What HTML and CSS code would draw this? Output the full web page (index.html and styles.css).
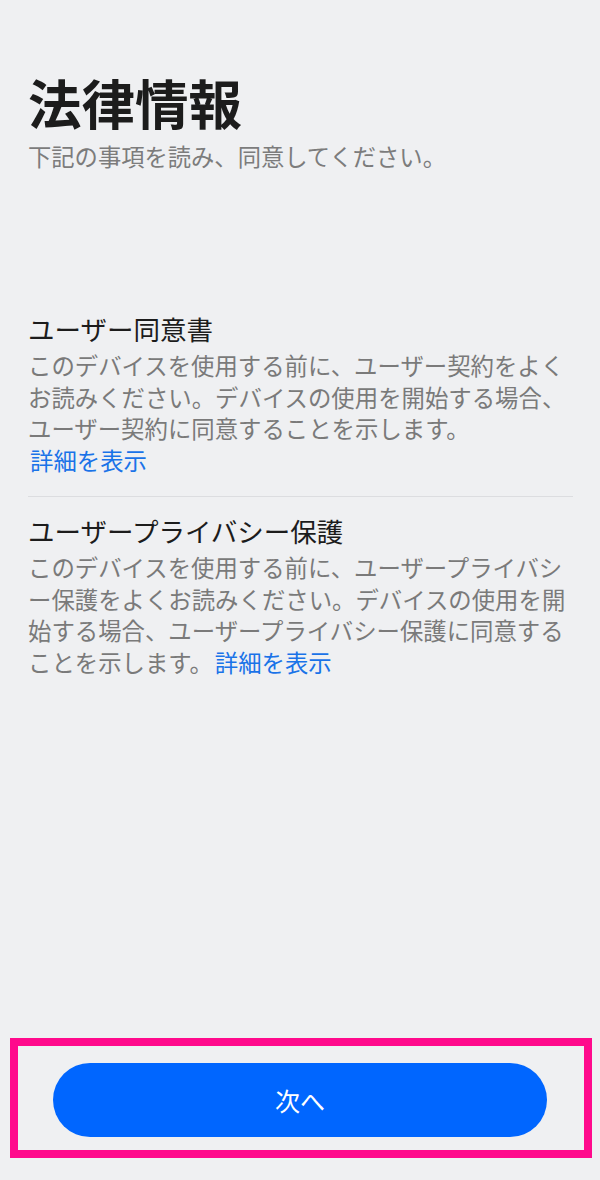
FILE: index.html
```html
<!DOCTYPE html>
<html lang="ja">
<head>
    <meta charset="UTF-8">
    <meta name="viewport" content="width=device-width, initial-scale=1.0">
    <title>法律情報</title>
    <link rel="stylesheet" href="styles.css">
</head>
<body>
    <div class="page">
        <!-- ヘッダー -->
        <div class="header">
            <h1>法律情報</h1>
            <p class="subtitle">下記の事項を読み、同意してください。</p>
        </div>

        <!-- 同意事項 -->
        <div class="terms">
            <div class="term-item">
                <h2>ユーザー同意書</h2>
                <p>このデバイスを使用する前に、ユーザー契約をよくお読みください。デバイスの使用を開始する場合、ユーザー契約に同意することを示します。<a href="#" class="more-link">詳細を表示</a></p>
            </div>
            <div class="term-item">
                <h2>ユーザープライバシー保護</h2>
                <p>このデバイスを使用する前に、ユーザープライバシー保護をよくお読みください。デバイスの使用を開始する場合、ユーザープライバシー保護に同意することを示します。<a href="#" class="more-link">詳細を表示</a></p>
            </div>
        </div>

        <!-- フッター -->
        <div class="footer">
            <button class="next-button">次へ</button>
        </div>
    </div>
</body>
</html>
```

FILE: styles.css
```css
* {
    box-sizing: border-box;
}

body {
    font-family: "Noto Sans CJK JP", "Noto Sans", sans-serif;
    background-color: #eff0f2;
    color: #1c1c1c;
    margin: 0;
}

.page {
    min-height: 100vh;
    display: flex;
    flex-direction: column;
}

.header {
    padding: 70px 28px 0 28px;
}

h1 {
    font-size: 53.5px;
    font-weight: 700;
    line-height: 64px;
    margin: 0;
}

.subtitle {
    font-size: 23.3px;
    line-height: 30px;
    color: #7c7c7c;
    margin: 7px 0 0 0;
}

.terms {
    padding: 140px 27px 0 28px;
}

.term-item {
    padding: 0 0 20px 0;
}

.term-item + .term-item {
    border-top: 1px solid #dcdde0;
    padding-top: 16px;
}

.term-item h2 {
    font-size: 26.5px;
    font-weight: 400;
    line-height: 36px;
    margin: 0 0 3px 0;
}

.term-item p {
    font-size: 23.4px;
    line-height: 31.5px;
    color: #7a7a7a;
    margin: 0;
}

.more-link {
    display: inline-block;
    color: #1a73e8;
    text-decoration: none;
    margin-left: 2px;
}

/* 枠で囲まれたボタン部分 */
.footer {
    margin: auto 8px 22px 10px;
    border: 8px solid #ff0a8c;
    padding: 17px 37px 13px 35px;
}

.next-button {
    display: block;
    width: 100%;
    height: 74px;
    border: none;
    border-radius: 37px;
    background-color: #0066ff;
    color: #ffffff;
    font-family: "Noto Sans CJK JP", sans-serif;
    font-size: 25px;
    cursor: pointer;
}
```
